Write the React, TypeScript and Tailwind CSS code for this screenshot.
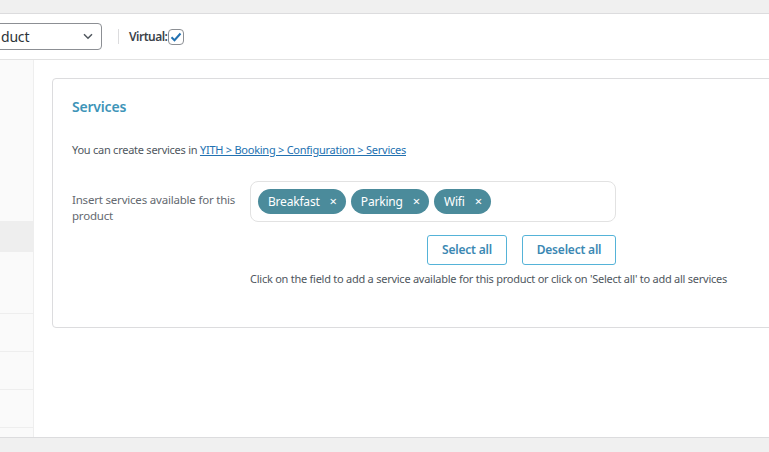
import React from "react";

const font = { fontFamily: '"Noto Sans", "Open Sans", sans-serif' };

function Chip({ label }: { label: string }) {
  return (
    <div className="flex items-center h-[25px] rounded-full bg-[#4b8b9b] text-white text-[12px] tracking-[-0.2px] pl-[10px] pr-[9px] gap-[10px]">
      <span>{label}</span>
      <span className="text-[13px] leading-none">×</span>
    </div>
  );
}

export default function App() {
  return (
    <div className="w-[769px] h-[452px] bg-[#f0f0f0] overflow-hidden flex flex-col" style={font}>
      <div className="h-[13px] shrink-0" />
      <div className="flex-1 flex flex-col bg-white border-t border-b border-[#dcdcde] min-h-0">
        {/* header */}
        <div className="h-[46px] shrink-0 flex items-center border-b border-[#e2e2e2]">
          <div className="-ml-[10px] w-[112px] h-[27px] border border-[#8c8f94] rounded-[4px] flex items-center justify-between pl-[10px] pr-[8px]">
            <span className="text-[14px] text-[#2c3338] tracking-[-0.2px]">duct</span>
            <svg width="10" height="7" viewBox="0 0 10 7" fill="none">
              <path d="M1 1.2l4 4 4-4" stroke="#50575e" strokeWidth="1.5" />
            </svg>
          </div>
          <div className="ml-[16px] w-px h-[15px] bg-[#dcdcde]" />
          <span className="ml-[10px] text-[12px] font-semibold text-[#3c434a] tracking-[-0.5px]">Virtual:</span>
          <div className="ml-[1px] w-[16px] h-[16px] border border-[#8c8f94] rounded-[4px] flex items-center justify-center">
            <svg width="12" height="10" viewBox="0 0 12 10" fill="none">
              <path d="M1.5 5.2l3 3L10.5 1.5" stroke="#2271b1" strokeWidth="2" />
            </svg>
          </div>
        </div>
        {/* body */}
        <div className="flex-1 flex min-h-0">
          <div className="w-[34px] shrink-0 bg-[#fafafa] border-r border-[#eeeeee] flex flex-col">
            <div className="h-[161px]" />
            <div className="h-[31px] bg-[#eeeeee]" />
            <div className="h-[62px] border-b border-[#eeeeee]" />
            <div className="h-[38px] border-b border-[#eeeeee]" />
            <div className="h-[38px] border-b border-[#eeeeee]" />
            <div className="h-[38px] border-b border-[#eeeeee]" />
          </div>
          <div className="flex-1 pl-[18px] pt-[18px] min-w-0">
            <div className="w-[740px] h-[250px] border border-[#dcdcde] rounded-[4px] pl-[19px] pt-[19px]">
              <div className="text-[14px] font-semibold text-[#3d94b8] leading-[18px] tracking-[-0.2px]">Services</div>
              <div className="mt-[26px] text-[11px] text-[#50575e] leading-[16px] tracking-[-0.25px]">
                You can create services in{" "}
                <span className="text-[#2271b1] underline">YITH &gt; Booking &gt; Configuration &gt; Services</span>
              </div>
              <div className="mt-[23px] flex">
                <div className="w-[178px] pt-[11px] text-[11.5px] leading-[16px] text-[#646970] pr-[6px] tracking-[-0.2px]">
                  Insert services available for this product
                </div>
                <div className="flex flex-col">
                  <div className="w-[366px] h-[41px] border border-[#e2e2e2] rounded-[8px] flex items-center gap-[5px] pl-[7px]">
                    <Chip label="Breakfast" />
                    <Chip label="Parking" />
                    <Chip label="Wifi" />
                  </div>
                  <div className="w-[366px] flex justify-end gap-[15px] mt-[13px]">
                    <button className="w-[80px] h-[30px] border border-[#55b3d8] rounded-[3px] text-[12px] font-semibold text-[#3b88b3] tracking-[-0.2px]">
                      Select all
                    </button>
                    <button className="w-[94px] h-[30px] border border-[#55b3d8] rounded-[3px] text-[12px] font-semibold text-[#3b88b3] tracking-[-0.2px]">
                      Deselect all
                    </button>
                  </div>
                  <div className="mt-[6px] text-[11px] text-[#50575e] whitespace-nowrap leading-[16px] tracking-[-0.25px]">
                    Click on the field to add a service available for this product or click on 'Select all' to add all services
                  </div>
                </div>
              </div>
            </div>
          </div>
        </div>
      </div>
      <div className="h-[14px] shrink-0" />
    </div>
  );
}
